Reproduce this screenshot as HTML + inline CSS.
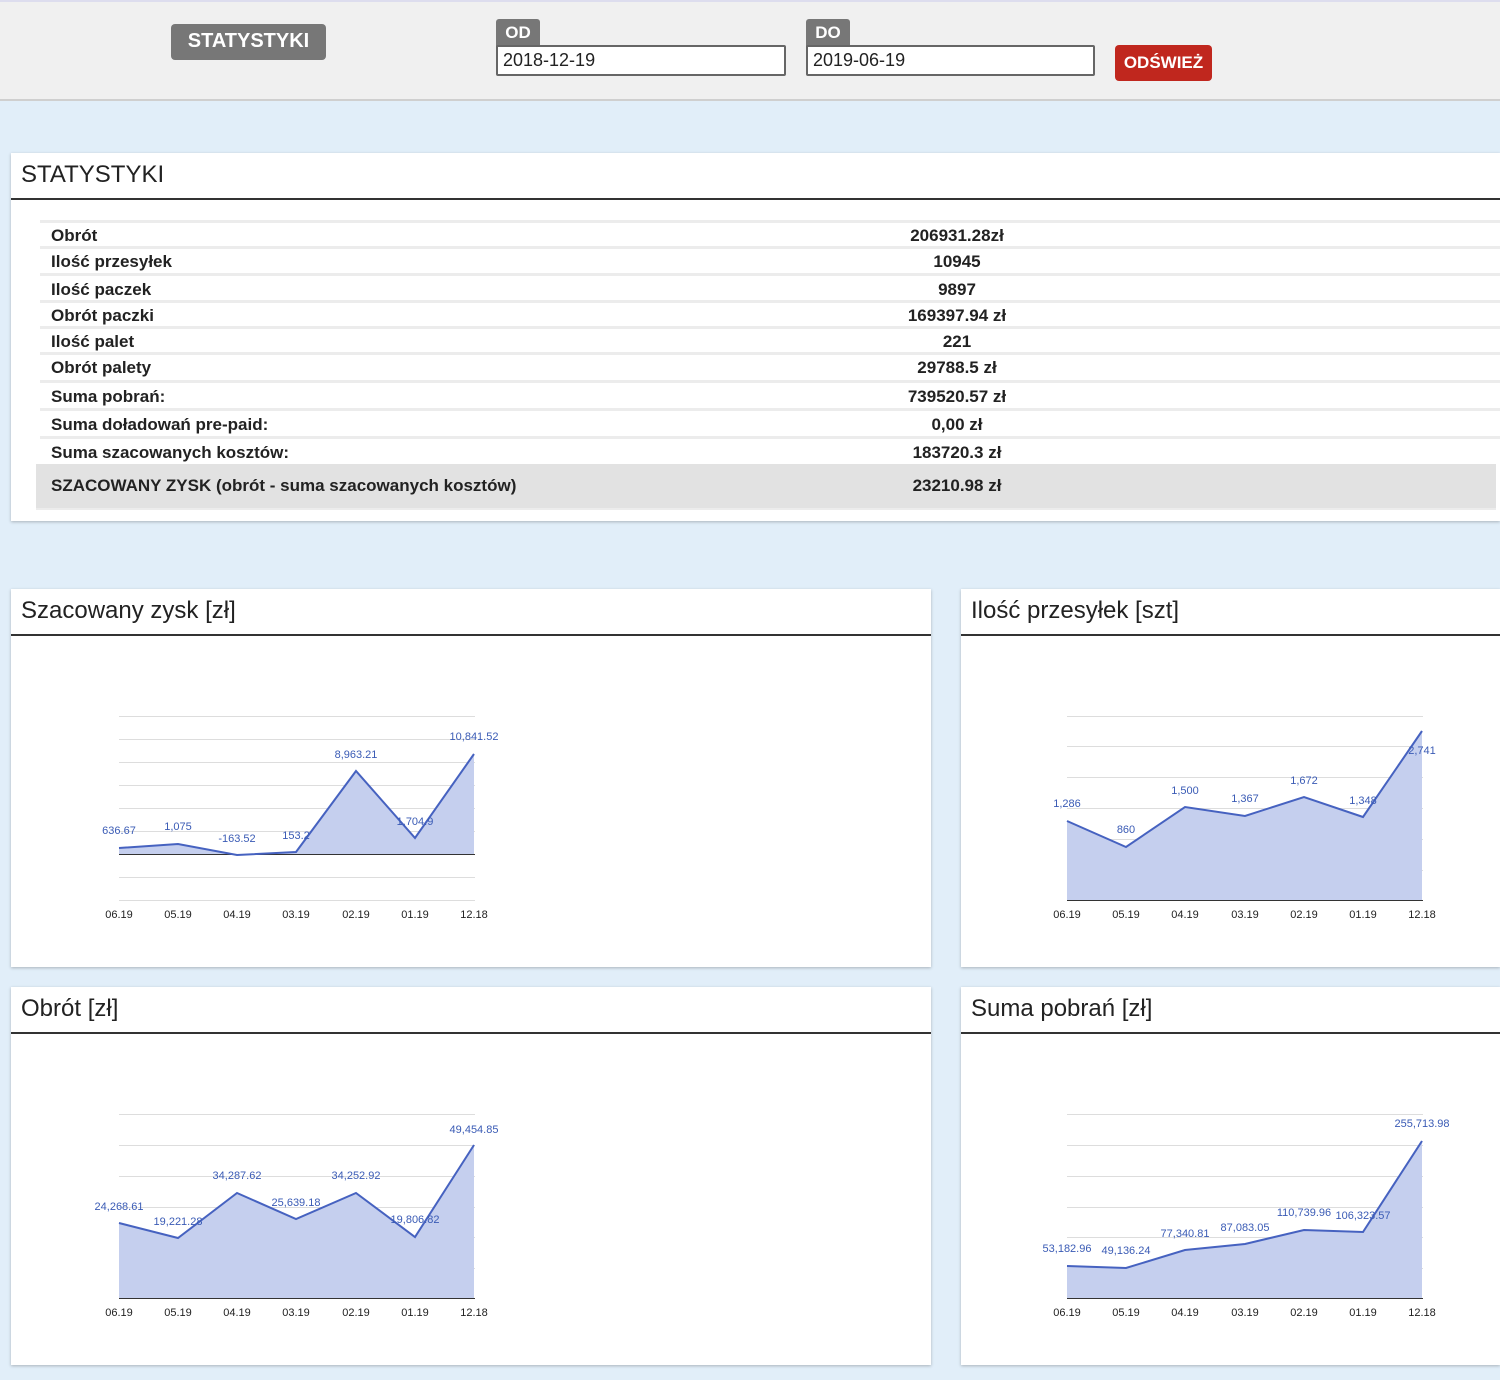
<!DOCTYPE html>
<html><head><meta charset="utf-8"><style>
*{margin:0;padding:0;box-sizing:border-box}
body{width:1500px;height:1380px;background:#e1eef9;font-family:"Liberation Sans",sans-serif;position:relative;overflow:hidden;color:#222}
.top{position:absolute;left:0;top:0;width:1500px;height:101px;background:#f0f0f0;border-bottom:2px solid #cfcfcf;border-top:2px solid #dde}
.btn{position:absolute;background:#777;color:#fff;font-weight:bold;border-radius:4px;text-align:center}
.inp{position:absolute;background:#fff;border:2px solid #666;border-radius:2px;font-size:18px;padding-left:5px;line-height:26px;height:31px}
.panel{position:absolute;background:#fff;box-shadow:0 1px 3px rgba(0,0,0,.25)}
.ph{height:47px;border-bottom:2px solid #333;font-size:24px;padding-left:10px;line-height:44px;color:#222}
.row{position:absolute;left:40px;width:1460px;border-top:3px solid #ececec;font-weight:bold;font-size:17px}
.row span{position:absolute;left:11px}
.row b{position:absolute;left:858px;width:118px;text-align:center}
svg text{font-family:"Liberation Sans",sans-serif;font-size:11px}
</style></head><body>
<div class="top">
<div class="btn" style="left:171px;top:22px;width:155px;height:36px;font-size:20px;line-height:34px">STATYSTYKI</div>
<div class="btn" style="left:496px;top:17px;width:44px;height:28px;font-size:17px;line-height:28px;border-radius:3px 3px 0 0">OD</div>
<div class="inp" style="left:496px;top:43px;width:290px">2018-12-19</div>
<div class="btn" style="left:806px;top:17px;width:44px;height:28px;font-size:17px;line-height:28px;border-radius:3px 3px 0 0">DO</div>
<div class="inp" style="left:806px;top:43px;width:289px">2019-06-19</div>
<div class="btn" style="left:1115px;top:43px;width:97px;height:36px;background:#c0271e;font-size:17px;line-height:36px">ODŚWIEŻ</div>
</div>

<div class="panel" style="left:11px;top:153px;width:1489px;height:368px">
<div class="ph">STATYSTYKI</div>
</div>
<div class="row" style="top:220px;height:27px"><span style="top:3px">Obrót</span><b style="top:3px">206931.28zł</b></div>
<div class="row" style="top:246px;height:27px"><span style="top:3px">Ilość przesyłek</span><b style="top:3px">10945</b></div>
<div class="row" style="top:273px;height:28px"><span style="top:4px">Ilość paczek</span><b style="top:4px">9897</b></div>
<div class="row" style="top:300px;height:27px"><span style="top:3px">Obrót paczki</span><b style="top:3px">169397.94 zł</b></div>
<div class="row" style="top:326px;height:27px"><span style="top:3px">Ilość palet</span><b style="top:3px">221</b></div>
<div class="row" style="top:352px;height:28px"><span style="top:3px">Obrót palety</span><b style="top:3px">29788.5 zł</b></div>
<div class="row" style="top:380px;height:28px"><span style="top:4px">Suma pobrań:</span><b style="top:4px">739520.57 zł</b></div>
<div class="row" style="top:408px;height:28px"><span style="top:4px">Suma doładowań pre-paid:</span><b style="top:4px">0,00 zł</b></div>
<div class="row" style="top:436px;height:28px"><span style="top:4px">Suma szacowanych kosztów:</span><b style="top:4px">183720.3 zł</b></div>
<div class="row" style="top:464px;height:46px;left:36px;border-top:none;border-bottom:2px solid #ececec;background:#e2e2e2"><span style="top:12px;left:15px">SZACOWANY ZYSK (obrót - suma szacowanych kosztów)</span><b style="top:12px;left:862px">23210.98 zł</b></div>

<div class="panel" style="left:11px;top:589px;width:920px;height:378px"><div class="ph">Szacowany zysk [zł]</div></div>
<div class="panel" style="left:961px;top:589px;width:539px;height:378px"><div class="ph">Ilość przesyłek [szt]</div></div>
<div class="panel" style="left:11px;top:987px;width:920px;height:378px"><div class="ph">Obrót [zł]</div></div>
<div class="panel" style="left:961px;top:987px;width:539px;height:378px"><div class="ph">Suma pobrań [zł]</div></div>

<svg width="1500" height="1380" style="position:absolute;left:0;top:0">
<g stroke="#ddd" stroke-width="1">
<path d="M119 716.5H475M119 739.5H475M119 762.5H475M119 785.5H475M119 808.5H475M119 831.5H475M119 877.5H475M119 900.5H475"/>
<path d="M1067 716.5H1423M1067 746.5H1423M1067 777.5H1423M1067 808.5H1423M1067 839.5H1423M1067 870.5H1423"/>
<path d="M119 1114.5H475M119 1145.5H475M119 1176.5H475M119 1207.5H475M119 1237.5H475M119 1268.5H475"/>
<path d="M1067 1114.5H1423M1067 1145.5H1423M1067 1176.5H1423M1067 1207.5H1423M1067 1237.5H1423M1067 1268.5H1423"/>
</g>
<g fill="#c5cfee" stroke="none">
<path d="M119 848L178 844L237 855L296 852L356 771L415 838L474 754L474 854L119 854Z"/>
<path d="M1067 821L1126 847L1185 807L1245 816L1304 797L1363 817L1422 731L1422 900L1067 900Z"/>
<path d="M119 1223L178 1238L237 1193L296 1219L356 1193L415 1237L474 1145L474 1298L119 1298Z"/>
<path d="M1067 1266L1126 1268L1185 1250L1245 1244L1304 1230L1363 1232L1422 1141L1422 1298L1067 1298Z"/>
</g>
<g stroke="#333" stroke-width="1"><path d="M119 854.5H475M1067 900.5H1423M119 1298.5H475M1067 1298.5H1423"/></g>
<g fill="none" stroke="#4662c0" stroke-width="2">
<path d="M119 848L178 844L237 855L296 852L356 771L415 838L474 754"/>
<path d="M1067 821L1126 847L1185 807L1245 816L1304 797L1363 817L1422 731"/>
<path d="M119 1223L178 1238L237 1193L296 1219L356 1193L415 1237L474 1145"/>
<path d="M1067 1266L1126 1268L1185 1250L1245 1244L1304 1230L1363 1232L1422 1141"/>
</g>
<g fill="#3a5bb5" text-anchor="middle">
<text x="119" y="834">636.67</text><text x="178" y="830">1,075</text><text x="237" y="842">-163.52</text><text x="296" y="839">153.2</text><text x="356" y="758">8,963.21</text><text x="415" y="825">1,704.9</text><text x="474" y="740">10,841.52</text>
<text x="1067" y="807">1,286</text><text x="1126" y="833">860</text><text x="1185" y="794">1,500</text><text x="1245" y="802">1,367</text><text x="1304" y="784">1,672</text><text x="1363" y="804">1,348</text><text x="1422" y="754">2,741</text>
<text x="119" y="1210">24,268.61</text><text x="178" y="1225">19,221.28</text><text x="237" y="1179">34,287.62</text><text x="296" y="1206">25,639.18</text><text x="356" y="1179">34,252.92</text><text x="415" y="1223">19,806.82</text><text x="474" y="1133">49,454.85</text>
<text x="1067" y="1252">53,182.96</text><text x="1126" y="1254">49,136.24</text><text x="1185" y="1237">77,340.81</text><text x="1245" y="1231">87,083.05</text><text x="1304" y="1216">110,739.96</text><text x="1363" y="1219">106,323.57</text><text x="1422" y="1127">255,713.98</text>
</g>
<g fill="#222" text-anchor="middle">
<text x="119" y="918">06.19</text><text x="178" y="918">05.19</text><text x="237" y="918">04.19</text><text x="296" y="918">03.19</text><text x="356" y="918">02.19</text><text x="415" y="918">01.19</text><text x="474" y="918">12.18</text>
<text x="1067" y="918">06.19</text><text x="1126" y="918">05.19</text><text x="1185" y="918">04.19</text><text x="1245" y="918">03.19</text><text x="1304" y="918">02.19</text><text x="1363" y="918">01.19</text><text x="1422" y="918">12.18</text>
<text x="119" y="1316">06.19</text><text x="178" y="1316">05.19</text><text x="237" y="1316">04.19</text><text x="296" y="1316">03.19</text><text x="356" y="1316">02.19</text><text x="415" y="1316">01.19</text><text x="474" y="1316">12.18</text>
<text x="1067" y="1316">06.19</text><text x="1126" y="1316">05.19</text><text x="1185" y="1316">04.19</text><text x="1245" y="1316">03.19</text><text x="1304" y="1316">02.19</text><text x="1363" y="1316">01.19</text><text x="1422" y="1316">12.18</text>
</g>
</svg>
</body></html>
